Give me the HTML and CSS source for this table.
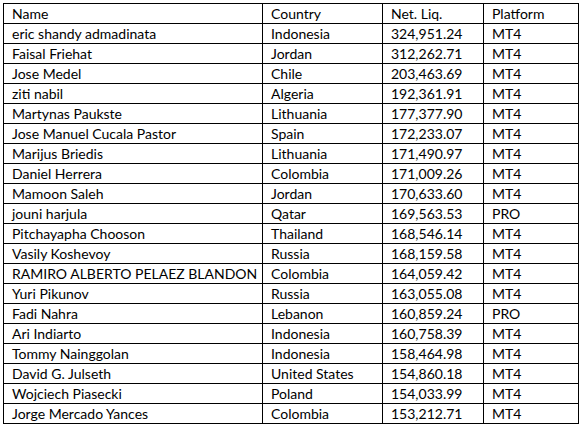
FILE: index.html
```html
<!DOCTYPE html>
<html>
<head>
<meta charset="utf-8">
<link rel="stylesheet" href="styles.css">
</head>
<body>
<table class="grid">
<colgroup><col class="c1"><col class="c2"><col class="c3"><col class="c4"></colgroup>
<tr><td>Name</td><td>Country</td><td>Net. Liq.</td><td>Platform</td></tr>
<tr><td>eric shandy admadinata</td><td>Indonesia</td><td>324,951.24</td><td>MT4</td></tr>
<tr><td>Faisal Friehat</td><td>Jordan</td><td>312,262.71</td><td>MT4</td></tr>
<tr><td>Jose Medel</td><td>Chile</td><td>203,463.69</td><td>MT4</td></tr>
<tr><td>ziti nabil</td><td>Algeria</td><td>192,361.91</td><td>MT4</td></tr>
<tr><td>Martynas Paukste</td><td>Lithuania</td><td>177,377.90</td><td>MT4</td></tr>
<tr><td>Jose Manuel Cucala Pastor</td><td>Spain</td><td>172,233.07</td><td>MT4</td></tr>
<tr><td>Marijus Briedis</td><td>Lithuania</td><td>171,490.97</td><td>MT4</td></tr>
<tr><td>Daniel Herrera</td><td>Colombia</td><td>171,009.26</td><td>MT4</td></tr>
<tr><td>Mamoon Saleh</td><td>Jordan</td><td>170,633.60</td><td>MT4</td></tr>
<tr><td>jouni harjula</td><td>Qatar</td><td>169,563.53</td><td>PRO</td></tr>
<tr><td>Pitchayapha Chooson</td><td>Thailand</td><td>168,546.14</td><td>MT4</td></tr>
<tr><td>Vasily Koshevoy</td><td>Russia</td><td>168,159.58</td><td>MT4</td></tr>
<tr><td>RAMIRO ALBERTO PELAEZ BLANDON</td><td>Colombia</td><td>164,059.42</td><td>MT4</td></tr>
<tr><td>Yuri Pikunov</td><td>Russia</td><td>163,055.08</td><td>MT4</td></tr>
<tr><td>Fadi Nahra</td><td>Lebanon</td><td>160,859.24</td><td>PRO</td></tr>
<tr><td>Ari Indiarto</td><td>Indonesia</td><td>160,758.39</td><td>MT4</td></tr>
<tr><td>Tommy Nainggolan</td><td>Indonesia</td><td>158,464.98</td><td>MT4</td></tr>
<tr><td>David G. Julseth</td><td>United States</td><td>154,860.18</td><td>MT4</td></tr>
<tr><td>Wojciech Piasecki</td><td>Poland</td><td>154,033.99</td><td>MT4</td></tr>
<tr><td>Jorge Mercado Yances</td><td>Colombia</td><td>153,212.71</td><td>MT4</td></tr>
</table>
</body>
</html>
```

FILE: styles.css
```css
html, body {
  margin: 0;
  padding: 0;
  background: #fff;
}
body {
  padding: 3px 0 0 3px;
}
.grid {
  border-collapse: collapse;
  table-layout: fixed;
  width: 575px;
  font-family: Lato, "Open Sans", sans-serif;
  font-size: 14px;
  color: #000;
}
.c1 { width: 259px; }
.c2 { width: 120px; }
.c3 { width: 101px; }
.c4 { width: 95px; }
.grid td {
  border: 1px solid #000;
  height: 19px;
  padding: 0 0 0 8px;
  line-height: 19px;
  white-space: nowrap;
  overflow: hidden;
}
```
